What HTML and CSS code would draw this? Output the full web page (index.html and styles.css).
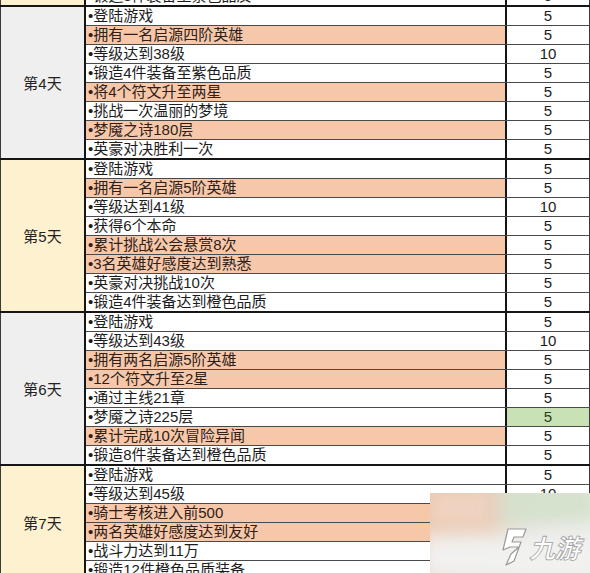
FILE: index.html
```html
<!DOCTYPE html>
<html>
<head>
<meta charset="utf-8">
<link rel="stylesheet" href="styles.css">
</head>
<body>
<div class="page">
<div class="sheet">
  <section class="block cream">
    <div class="day"></div>
    <div class="rows">
      <div class="row"><div class="task">•锻造3件装备至紫色品质</div><div class="pts">5</div></div>
    </div>
  </section>
  <section class="block grey">
    <div class="day">第4天</div>
    <div class="rows">
      <div class="row"><div class="task">•登陆游戏</div><div class="pts">5</div></div>
      <div class="row"><div class="task hl">•拥有一名启源四阶英雄</div><div class="pts">5</div></div>
      <div class="row"><div class="task">•等级达到38级</div><div class="pts">10</div></div>
      <div class="row"><div class="task">•锻造4件装备至紫色品质</div><div class="pts">5</div></div>
      <div class="row"><div class="task hl">•将4个符文升至两星</div><div class="pts">5</div></div>
      <div class="row"><div class="task">•挑战一次温丽的梦境</div><div class="pts">5</div></div>
      <div class="row"><div class="task hl">•梦魇之诗180层</div><div class="pts">5</div></div>
      <div class="row"><div class="task">•英豪对决胜利一次</div><div class="pts">5</div></div>
    </div>
  </section>
  <section class="block cream">
    <div class="day">第5天</div>
    <div class="rows">
      <div class="row"><div class="task">•登陆游戏</div><div class="pts">5</div></div>
      <div class="row"><div class="task hl">•拥有一名启源5阶英雄</div><div class="pts">5</div></div>
      <div class="row"><div class="task">•等级达到41级</div><div class="pts">10</div></div>
      <div class="row"><div class="task">•获得6个本命</div><div class="pts">5</div></div>
      <div class="row"><div class="task hl">•累计挑战公会悬赏8次</div><div class="pts">5</div></div>
      <div class="row"><div class="task hl">•3名英雄好感度达到熟悉</div><div class="pts">5</div></div>
      <div class="row"><div class="task">•英豪对决挑战10次</div><div class="pts">5</div></div>
      <div class="row"><div class="task">•锻造4件装备达到橙色品质</div><div class="pts">5</div></div>
    </div>
  </section>
  <section class="block grey">
    <div class="day">第6天</div>
    <div class="rows">
      <div class="row"><div class="task">•登陆游戏</div><div class="pts">5</div></div>
      <div class="row"><div class="task">•等级达到43级</div><div class="pts">10</div></div>
      <div class="row"><div class="task hl">•拥有两名启源5阶英雄</div><div class="pts">5</div></div>
      <div class="row"><div class="task hl">•12个符文升至2星</div><div class="pts">5</div></div>
      <div class="row"><div class="task">•通过主线21章</div><div class="pts">5</div></div>
      <div class="row"><div class="task">•梦魇之诗225层</div><div class="pts green">5</div></div>
      <div class="row"><div class="task hl">•累计完成10次冒险异闻</div><div class="pts">5</div></div>
      <div class="row"><div class="task">•锻造8件装备达到橙色品质</div><div class="pts">5</div></div>
    </div>
  </section>
  <section class="block cream">
    <div class="day">第7天</div>
    <div class="rows">
      <div class="row"><div class="task">•登陆游戏</div><div class="pts">5</div></div>
      <div class="row"><div class="task">•等级达到45级</div><div class="pts">10</div></div>
      <div class="row"><div class="task hl">•骑士考核进入前500</div><div class="pts">5</div></div>
      <div class="row"><div class="task hl">•两名英雄好感度达到友好</div><div class="pts">5</div></div>
      <div class="row"><div class="task">•战斗力达到11万</div><div class="pts">5</div></div>
      <div class="row"><div class="task">•锻造12件橙色品质装备</div><div class="pts">5</div></div>
    </div>
  </section>
</div>
<div class="watermark">
  <div class="wm-blur"><span class="b1"></span><span class="b2"></span><span class="b3"></span></div>
  <div class="wm-logo">
    <svg class="wm-icon" width="30" height="40" viewBox="0 0 30 40">
      <path d="M10 2 L28 2 L25 10 L16 10 L14 15 L23 15 L16 34 L8 38 L13 27 L21 20 L12 20 L5 23 Z" fill="#fff" stroke="#9a9a9a" stroke-width="1.2" stroke-linejoin="round"/>
    </svg>
    <span class="wm-text">九游</span>
  </div>
</div>
</div>
</body>
</html>
```
FILE: styles.css
```css
html, body {
  margin: 0;
  padding: 0;
  background: #ffffff;
}
.page {
  position: relative;
  width: 590px;
  height: 573px;
  overflow: hidden;
}
.sheet {
  width: 590px;
  margin-top: -15px;
  font-family: "Liberation Sans", "Noto Sans CJK SC", sans-serif;
  font-size: 15px;
  color: #1c1c1c;
}
.block {
  display: flex;
  border-top: 2px solid #151515;
}
.day {
  box-sizing: border-box;
  width: 86px;
  flex: none;
  display: flex;
  align-items: center;
  justify-content: center;
  border-left: 1px solid #3a3a3a;
  border-right: 2px solid #151515;
  color: #222;
}
.grey .day { background: #efefef; }
.cream .day { background: #fdf1cf; }
.rows {
  flex: 1;
  display: flex;
  flex-direction: column;
}
.row {
  box-sizing: border-box;
  display: flex;
  height: 19px;
  border-top: 1px solid #4a4a4a;
}
.row:first-child {
  height: 18px;
  border-top: none;
}
.task {
  flex: 1;
  padding-left: 2px;
  line-height: 18px;
  white-space: nowrap;
  overflow: hidden;
  background: #ffffff;
}
.task.hl { background: #f6c8a9; color: #2e2018; }
.pts {
  box-sizing: border-box;
  width: 85px;
  flex: none;
  text-align: center;
  line-height: 18px;
  border-left: 2px solid #151515;
  border-right: 1px solid #3a3a3a;
  background: #ffffff;
}
.pts.green { background: #c8e1b5; color: #27401c; }

.watermark {
  position: absolute;
  left: 430px;
  top: 493px;
  width: 160px;
  height: 80px;
  overflow: hidden;
}
.wm-blur {
  position: absolute;
  inset: 0;
  background: linear-gradient(90deg, #ecc6ad 0%, #e8cdb8 38%, #e4e2dc 60%, #eceeea 100%);
}
.wm-blur .b1 {
  position: absolute;
  left: 70px; top: -10px;
  width: 100px; height: 40px;
  background: #d4e1cc;
  filter: blur(10px);
}
.wm-blur .b2 {
  position: absolute;
  left: -10px; top: 40px;
  width: 180px; height: 50px;
  background: #f1f1f0;
  filter: blur(10px);
}
.wm-blur .b3 {
  position: absolute;
  left: 0; top: 0;
  width: 60px; height: 30px;
  background: #efd3c1;
  filter: blur(8px);
}
.wm-logo {
  position: absolute;
  left: 68px;
  top: 34px;
  display: flex;
  align-items: center;
  gap: 4px;
}
.wm-text {
  font-family: "Noto Sans CJK SC", sans-serif;
  font-size: 26px;
  font-weight: 700;
  transform: skewX(-14deg);
  color: #ffffff;
  -webkit-text-stroke: 0.8px #a0a0a0;
  letter-spacing: -1px;
  line-height: 30px;
}
```
